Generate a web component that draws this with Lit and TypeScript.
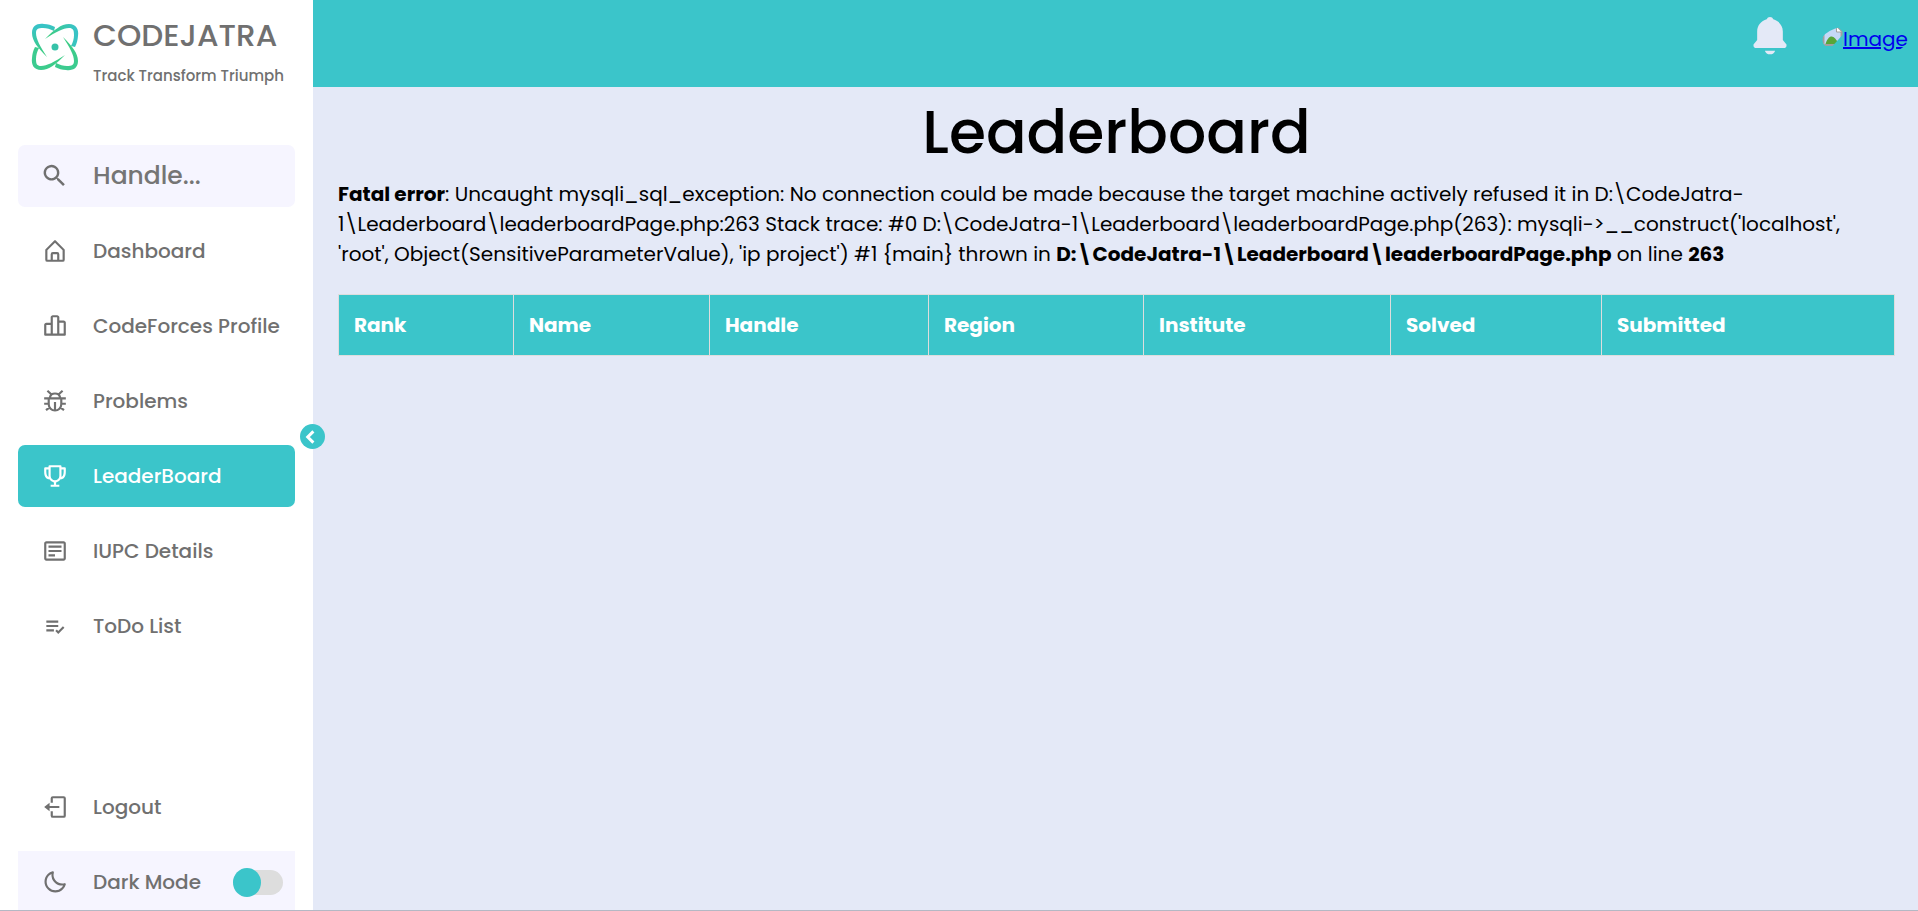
import { LitElement, html, css, svg } from "lit";
import { customElement } from "lit/decorators.js";

const icons: Record<string, unknown> = {
  search: svg`<path d="M15.700 14.200h-.8l-.3-.3a6.600 6.600 0 1 0-.7.7l.3.3v.8l5.100 5.100 1.500-1.500zm-6.100 0a4.600 4.600 0 1 1 0-9.200 4.600 4.600 0 0 1 0 9.200z" transform="translate(-1.800 -1.600) scale(1.100)"/>`,
  home: svg`<path d="M5 22h14a2 2 0 0 0 2-2v-9a1 1 0 0 0-.29-.71l-8-8a1 1 0 0 0-1.41 0l-8 8A1 1 0 0 0 3 11v9a2 2 0 0 0 2 2zm5-2v-5h4v5zm-5-8.59 7-7 7 7V20h-3v-5a2 2 0 0 0-2-2h-4a2 2 0 0 0-2 2v5H5z"/>`,
  chart: svg`<path d="M20 7h-4V4c0-1.103-.897-2-2-2h-4c-1.103 0-2 .897-2 2v5H4c-1.103 0-2 .897-2 2v9a1 1 0 0 0 1 1h18a1 1 0 0 0 1-1V9c0-1.103-.897-2-2-2zM4 11h4v8H4v-8zm6-1V4h4v15h-4v-9zm10 9h-4V9h4v10z"/>`,
  bug: svg`<g fill="none" stroke="currentColor" stroke-width="2"><path d="M6.200 9.500V15a5.800 5.800 0 0 0 11.600 0V9.500M7.200 9a4.900 4.900 0 0 1 9.600 0M2 9.600h20M12 13v7.500M2 14.500h4.200M17.800 14.500H22M3.700 20.500l3.400-2.700M20.300 20.500l-3.400-2.700M5 2.500l3.500 3.200M19 2.500l-3.500 3.200"/></g>`,
  trophy: svg`<path d="M21 4h-3V3a1 1 0 0 0-1-1H7a1 1 0 0 0-1 1v1H3a1 1 0 0 0-1 1v3c0 4.310 1.799 6.910 4.819 7.012A6.001 6.001 0 0 0 11 17.910V20H8v2h8v-2h-3v-2.090a6.010 6.010 0 0 0 4.181-2.898C20.201 14.910 22 12.310 22 8V5a1 1 0 0 0-1-1zM4 8V6h2v6.830C4.216 12.078 4 9.299 4 8zm8 8c-2.206 0-4-1.794-4-4V4h8v8c0 2.206-1.794 4-4 4zm6-3.170V6h2v2c0 1.299-.216 4.078-2 4.830z"/>`,
  news: svg`<path d="M20 3H4c-1.103 0-2 .897-2 2v14c0 1.103.897 2 2 2h16c1.103 0 2-.897 2-2V5c0-1.103-.897-2-2-2zM4 19V5h16l.002 14H4z"/><path d="M6 7h12v2H6zm0 4h12v2H6zm0 4h6v2H6z"/>`,
  list: svg`<path d="M4 7h11v2H4zm0 4h11v2H4zm0 4h7v2H4zm15.299-2.708-4.300 4.291-1.292-1.291-1.414 1.415 2.706 2.704 5.712-5.703z"/>`,
  logout: svg`<path d="m2 12 5 4v-3h9v-2H7V8z"/><path d="M20 2H10a2 2 0 0 0-2 2v4h2V4h10v16H10v-4H8v4a2 2 0 0 0 2 2h10a2 2 0 0 0 2-2V4a2 2 0 0 0-2-2z"/>`,
  moon: svg`<path d="M20.742 13.045a8.088 8.088 0 0 1-2.077.271c-2.135 0-4.140-.830-5.646-2.336a8.025 8.025 0 0 1-2.064-7.723A1 1 0 0 0 9.730 2.034a10.014 10.014 0 0 0-4.489 2.582c-3.898 3.898-3.898 10.243 0 14.143a9.937 9.937 0 0 0 7.072 2.930 9.930 9.930 0 0 0 7.070-2.929 10.007 10.007 0 0 0 2.583-4.491 1.001 1.001 0 0 0-1.224-1.224zm-2.772 4.301a7.947 7.947 0 0 1-5.656 2.343 7.953 7.953 0 0 1-5.658-2.344c-3.118-3.119-3.118-8.195 0-11.314a7.923 7.923 0 0 1 2.060-1.483 10.027 10.027 0 0 0 2.890 7.848 9.972 9.972 0 0 0 7.848 2.891 8.036 8.036 0 0 1-1.484 2.059z"/>`,
  chevron: svg`<path fill="none" stroke="currentColor" stroke-width="4" d="M12.500 4.500 5 12l7.500 7.500"/>`,
  bell: svg`<path d="M12 22a2.980 2.980 0 0 0 2.818-2H9.182A2.980 2.980 0 0 0 12 22zm9-4.500v-.8l-2-2.500V9.500c0-3.300-2.200-5.700-5.200-6.600a1.900 1.900 0 0 0-3.600 0C7.200 3.800 5 6.200 5 9.500v4.700l-2 2.500v.8a1 1 0 0 0 1 1h16a1 1 0 0 0 1-1z"/>`,
};

const icon = (name: string) =>
  html`<svg class="icon" viewBox="0 0 24 24" fill="currentColor" aria-hidden="true">${icons[name]}</svg>`;

const nav = [
  ["home", "Dashboard"],
  ["chart", "CodeForces Profile"],
  ["bug", "Problems"],
  ["trophy", "LeaderBoard"],
  ["news", "IUPC Details"],
  ["list", "ToDo List"],
];

const columns: [string, number][] = [
  ["Rank", 175],
  ["Name", 196],
  ["Handle", 219],
  ["Region", 215],
  ["Institute", 247],
  ["Solved", 211],
  ["Submitted", 293],
];
const total = columns.reduce((sum, [, w]) => sum + w, 0);

const blade = "M15 17C24 8 31 2 39 2c7 0 10 5 9 12-.3 4-1 7-3 11l-4-1c2-4 3-7 3-11 0-5-1-7-5-7-6 0-13 4-24 11z";

@customElement("app-root")
export class AppRoot extends LitElement {
  static styles = css`
    * { box-sizing: border-box; margin: 0; padding: 0; }
    :host {
      box-sizing: border-box;
      display: flex;
      height: 100vh;
      overflow: hidden;
      background: #e4e9f7;
      color: #000;
      border-bottom: 1px solid #b4b8c4;
      font: 400 20px/30px Poppins, Inter, sans-serif;
    }
    .side {
      position: relative;
      flex: none;
      display: flex;
      flex-direction: column;
      width: 313px;
      padding: 0 18px;
      background: #fff;
      color: #707070;
      font-weight: 500;
    }
    .brand { display: flex; height: 145px; padding-top: 12px; }
    .mark { width: 75px; padding: 10px 0 0 12px; }
    .mark svg { width: 50px; height: 50px; }
    .name { font-size: 31px; line-height: 46px; }
    .tag { font-size: 15px; line-height: 36px; white-space: nowrap; }
    .row {
      display: flex;
      align-items: center;
      flex: none;
      width: 100%;
      height: 62px;
      border-radius: 7px;
      color: inherit;
      text-decoration: none;
      white-space: nowrap;
    }
    .row > .icon { flex: none; width: 26px; height: 26px; margin: 0 25px 0 24px; }
    .soft { background: #f6f5ff; }
    .menu { display: flex; flex-direction: column; gap: 13px; list-style: none; margin-top: 13px; }
    .active { background: #3bc5ca; color: #fff; }
    .foot { display: flex; flex-direction: column; gap: 13px; margin-top: auto; margin-bottom: -3px; }
    .search {
      width: 100%;
      min-width: 0;
      border: 0;
      outline: 0;
      background: none;
      font: 500 25px/30px Poppins, Inter, sans-serif;
      color: #707070;
    }
    .search::placeholder { color: #757575; opacity: 1; }
    .square { border-radius: 0; }
    .dark { flex: 1; }
    .switch {
      appearance: none;
      display: flex;
      align-items: center;
      flex: none;
      width: 50px;
      height: 25px;
      margin-right: 12px;
      border-radius: 13px;
      background: #ddd;
    }
    .switch::before { content: ""; width: 28px; height: 29px; flex: none; border-radius: 50%; background: #3bc5ca; }
    .toggle {
      position: absolute;
      top: 424px;
      right: -12px;
      display: grid;
      place-items: center;
      width: 25px;
      height: 25px;
      border: 0;
      border-radius: 50%;
      background: #3bc5ca;
      color: #fff;
    }
    .toggle .icon { width: 18px; height: 18px; }
    .page { flex: 1; min-width: 0; }
    .top {
      display: flex;
      justify-content: flex-end;
      gap: 30px;
      height: 87px;
      padding: 14px 10px 0 0;
      background: #3bc5ca;
    }
    .bell { width: 44px; height: 44px; border: 0; background: none; color: #e4e9f7; }
    .bell .icon { width: 44px; height: 44px; display: block; }
    .avatar {
      display: flex;
      align-items: flex-start;
      width: 86px;
      height: 32px;
      margin-top: 10px;
      border-radius: 50%;
      overflow: hidden;
      color: #00e;
    }
    .avatar svg { flex: none; width: 21px; height: 22px; padding-top: 2px; }
    .content { padding: 8px 23px 0 25px; }
    h1 { font-size: 60px; line-height: 75px; font-weight: 500; text-align: center; }
    .error { margin-top: 9px; }
    b { font-weight: 700; }
    table { width: 100%; margin-top: 25px; border-collapse: collapse; table-layout: fixed; }
    th {
      padding: 15px;
      border: 1px solid #ddd;
      background: #3bc5ca;
      color: #fff;
      font-weight: 700;
      text-align: left;
    }
  `;

  render() {
    return html`
      <aside class="side">
        <header class="brand">
          <div class="mark">
            <svg viewBox="0 0 50 50" fill="none" aria-hidden="true">
              <defs>
                <linearGradient id="up" x1="15" y1="17" x2="46" y2="12" gradientUnits="userSpaceOnUse">
                  <stop offset="0.2" stop-color="#3ccc86" /><stop offset="1" stop-color="#38c3c6" />
                </linearGradient>
                <linearGradient id="down" x1="15" y1="17" x2="46" y2="12" gradientUnits="userSpaceOnUse">
                  <stop offset="0.2" stop-color="#3ccc86" /><stop offset="1" stop-color="#3ccb90" />
                </linearGradient>
              </defs>
              <path fill="url(#up)" d=${blade} />
              <path fill="url(#down)" transform="rotate(90 25 25)" d=${blade} />
              <path fill="url(#down)" transform="rotate(180 25 25)" d=${blade} />
              <path fill="url(#up)" transform="rotate(270 25 25)" d=${blade} />
              <circle cx="25" cy="25" r="3.500" fill="#36c2a8" />
            </svg>
          </div>
          <div>
            <div class="name">CODEJATRA</div>
            <div class="tag">Track Transform Triumph</div>
          </div>
        </header>
        <label class="row soft">${icon("search")}<input class="search" type="search" placeholder="Handle..." aria-label="Handle" /></label>
        <nav>
          <ul class="menu">
            ${nav.map(
              ([i, label]) => html`<li><a class="row ${label === "LeaderBoard" ? "active" : ""}" href="#">${icon(i)}${label}</a></li>`
            )}
          </ul>
        </nav>
        <div class="foot">
          <a class="row" href="#">${icon("logout")}Logout</a>
          <label class="row soft square">${icon("moon")}<span class="dark">Dark Mode</span><input class="switch" type="checkbox" /></label>
        </div>
        <button class="toggle" aria-label="Collapse sidebar">${icon("chevron")}</button>
      </aside>
      <div class="page">
        <header class="top">
          <button class="bell" aria-label="Notifications">${icon("bell")}</button>
          <a class="avatar" href="#">
            <svg viewBox="0 0 20 20" aria-hidden="true">
              <path d="M1 1h13l5 5v13H1z" fill="#c5d9f7" stroke="#a0a0a0" stroke-width="2" />
              <path d="M3 18c3-10 9-10 13 0z" fill="#57a639" />
              <path d="M14 1v5h5" fill="#fff" stroke="#a0a0a0" />
              <path d="M20 9 10 20h10z" fill="#3bc5ca" />
            </svg>Image</a>
        </header>
        <main class="content">
          <h1>Leaderboard</h1>
          <p class="error"><b>Fatal error</b>: Uncaught mysqli_sql_exception: No connection could be made because the target machine actively refused it in D:\\CodeJatra-1\\Leaderboard\\leaderboardPage.php:263 Stack trace: #0 D:\\CodeJatra-1\\Leaderboard\\leaderboardPage.php(263): mysqli-&gt;__construct('localhost', 'root', Object(SensitiveParameterValue), 'ip project') #1 {main} thrown in <b>D:\\CodeJatra-1\\Leaderboard\\leaderboardPage.php</b> on line <b>263</b></p>
          <table>
            <colgroup>${columns.map(([, w]) => html`<col style="width:${(w / total) * 100}%" />`)}</colgroup>
            <thead><tr>${columns.map(([c]) => html`<th scope="col">${c}</th>`)}</tr></thead>
          </table>
        </main>
      </div>
    `;
  }
}
